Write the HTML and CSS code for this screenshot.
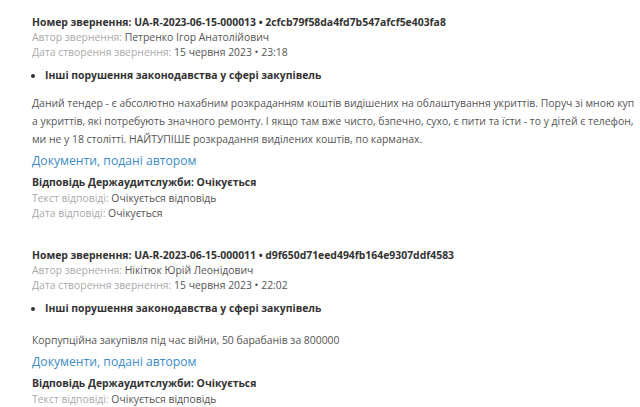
FILE: index.html
```html
<!DOCTYPE html>
<html lang="uk">
<head>
    <meta charset="UTF-8">
    <meta name="viewport" content="width=device-width, initial-scale=1.0">
    <title>Звернення</title>
    <link rel="stylesheet" href="styles.css">
</head>
<body>
    <div class="list">
        <div class="appeal">
            <div class="appeal-title">Номер звернення: UA-R-2023-06-15-000013 • 2cfcb79f58da4fd7b547afcf5e403fa8</div>
            <div class="meta"><span class="label">Автор звернення:</span> Петренко Ігор Анатолійович</div>
            <div class="meta"><span class="label">Дата створення звернення:</span> 15 червня 2023 • 23:18</div>
            <ul class="violations">
                <li>Інші порушення законодавства у сфері закупівель</li>
            </ul>
            <p class="description">Даний тендер - є абсолютно нахабним розкраданням коштів видішених на облаштування укриттів. Поруч зі мною куп<br>а укриттів, які потребують значного ремонту. І якщо там вже чисто, бзпечно, сухо, є пити та їсти - то у дітей є телефон,<br>ми не у 18 столітті. НАЙТУПІШЕ розкрадання виділених коштів, по карманах.</p>
            <a class="docs-link" href="#">Документи, подані автором</a>
            <div class="answer-title">Відповідь Держаудитслужби: Очікується</div>
            <div class="meta"><span class="label">Текст відповіді:</span> Очікується відповідь</div>
            <div class="meta"><span class="label">Дата відповіді:</span> Очікується</div>
        </div>

        <div class="appeal">
            <div class="appeal-title">Номер звернення: UA-R-2023-06-15-000011 • d9f650d71eed494fb164e9307ddf4583</div>
            <div class="meta"><span class="label">Автор звернення:</span> Нікітюк Юрій Леонідович</div>
            <div class="meta"><span class="label">Дата створення звернення:</span> 15 червня 2023 • 22:02</div>
            <ul class="violations">
                <li>Інші порушення законодавства у сфері закупівель</li>
            </ul>
            <p class="description short">Корпупційна закупівля під час війни, 50 барабанів за 800000</p>
            <a class="docs-link" href="#">Документи, подані автором</a>
            <div class="answer-title">Відповідь Держаудитслужби: Очікується</div>
            <div class="meta"><span class="label">Текст відповіді:</span> Очікується відповідь</div>
            <div class="meta"><span class="label">Дата відповіді:</span> Очікується</div>
        </div>
    </div>
</body>
</html>
```

FILE: styles.css
```css
body {
    margin: 0;
    background-color: #fff;
    font-family: "Open Sans", Arial, sans-serif;
    font-size: 10.4px;
    color: #555;
    overflow: hidden;
}

.list {
    padding: 14px 0 0 32px;
    white-space: nowrap;
}

.appeal {
    margin-bottom: 26px;
}

.appeal-title,
.answer-title {
    font-weight: 700;
    color: #333;
    line-height: 16px;
}

.meta {
    line-height: 15px;
    color: #555;
}

.label {
    color: #aaa;
}

.violations {
    margin: 7px 0 0 0;
    padding: 0 0 0 13px;
    font-weight: 700;
    color: #333;
    line-height: 16px;
}

.violations li::marker {
    font-size: 10px;
}

.description {
    margin: 11px 0 0 0;
    line-height: 18px;
    color: #555;
}

.description.short {
    margin-top: 15px;
}

.docs-link {
    display: block;
    margin-top: 2px;
    font-size: 12.2px;
    line-height: 22px;
    color: #3d8bc4;
    text-decoration: none;
}

.answer-title {
    margin-top: 2px;
    line-height: 17px;
}
```
